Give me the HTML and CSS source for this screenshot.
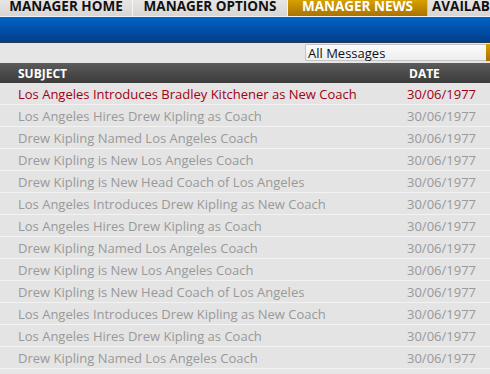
FILE: index.html
```html
<!DOCTYPE html>
<html lang="en">
<head>
  <meta charset="UTF-8">
  <title>Manager News</title>
  <link rel="stylesheet" href="styles.css">
</head>
<body>
  <div class="tabs">
    <div class="tab tab-home">MANAGER HOME</div>
    <div class="tab tab-options">MANAGER OPTIONS</div>
    <div class="tab tab-news active">MANAGER NEWS</div>
    <div class="tab tab-avail">AVAILABLE JOBS</div>
  </div>
  <div class="blue-bar"></div>
  <div class="filter-row">
    <div class="select-box">
      <span>All Messages</span>
      <div class="select-btn"></div>
    </div>
  </div>
  <div class="news-head">
    <div class="col-subject">SUBJECT</div>
    <div class="col-date">DATE</div>
  </div>
  <div class="news-list">
    <div class="news-row unread"><div class="col-subject">Los Angeles Introduces Bradley Kitchener as New Coach</div><div class="col-date">30/06/1977</div></div>
    <div class="news-row"><div class="col-subject">Los Angeles Hires Drew Kipling as Coach</div><div class="col-date">30/06/1977</div></div>
    <div class="news-row"><div class="col-subject">Drew Kipling Named Los Angeles Coach</div><div class="col-date">30/06/1977</div></div>
    <div class="news-row"><div class="col-subject">Drew Kipling is New Los Angeles Coach</div><div class="col-date">30/06/1977</div></div>
    <div class="news-row"><div class="col-subject">Drew Kipling is New Head Coach of Los Angeles</div><div class="col-date">30/06/1977</div></div>
    <div class="news-row"><div class="col-subject">Los Angeles Introduces Drew Kipling as New Coach</div><div class="col-date">30/06/1977</div></div>
    <div class="news-row"><div class="col-subject">Los Angeles Hires Drew Kipling as Coach</div><div class="col-date">30/06/1977</div></div>
    <div class="news-row"><div class="col-subject">Drew Kipling Named Los Angeles Coach</div><div class="col-date">30/06/1977</div></div>
    <div class="news-row"><div class="col-subject">Drew Kipling is New Los Angeles Coach</div><div class="col-date">30/06/1977</div></div>
    <div class="news-row"><div class="col-subject">Drew Kipling is New Head Coach of Los Angeles</div><div class="col-date">30/06/1977</div></div>
    <div class="news-row"><div class="col-subject">Los Angeles Introduces Drew Kipling as New Coach</div><div class="col-date">30/06/1977</div></div>
    <div class="news-row"><div class="col-subject">Los Angeles Hires Drew Kipling as Coach</div><div class="col-date">30/06/1977</div></div>
    <div class="news-row"><div class="col-subject">Drew Kipling Named Los Angeles Coach</div><div class="col-date">30/06/1977</div></div>
  </div>
</body>
</html>
```

FILE: styles.css
```css
body {
  margin: 0;
  font-family: "Open Sans", "DejaVu Sans", sans-serif;
  background: #e6e6e6;
  overflow: hidden;
}
.tabs {
  display: flex;
  height: 16px;
  background: #e2e0de;
  border-bottom: 1px solid #f2f2f2;
  white-space: nowrap;
  overflow: hidden;
}
.tab {
  height: 16px;
  line-height: 12px;
  font-size: 13.5px;
  font-weight: bold;
  color: #111;
  text-align: center;
  background: linear-gradient(#e8e6e4, #d8d6d4);
  border-right: 1px solid #f4f4f4;
  box-sizing: border-box;
  flex: none;
}
.tab-home { width: 133px; }
.tab-options { width: 155px; }
.tab-news { width: 140px; }
.tab-avail { width: 140px; padding-left: 4px; text-align: left; }
.tab.active {
  color: #fff;
  background: linear-gradient(#d9a000, #a87200);
  border-right-color: #c8c6c4;
}
.blue-bar {
  height: 25px;
  background: linear-gradient(#0064c8, #004fa8 50%, #00408c);
  border-bottom: 1px solid #2a3a50;
}
.filter-row {
  height: 20px;
  display: flex;
  justify-content: flex-end;
  padding-top: 1px;
  box-sizing: border-box;
}
.select-box {
  width: 185px;
  height: 17px;
  box-sizing: border-box;
  background: linear-gradient(#fbfbfb, #eeeeee);
  border: 1px solid #c4c4c4;
  border-right: none;
  border-radius: 2px 0 0 2px;
  display: flex;
  align-items: center;
  font-size: 13px;
  color: #111;
  padding-left: 2px;
}
.select-box span { flex: 1; }
.select-btn {
  width: 4px;
  height: 17px;
  background: linear-gradient(#d9a000, #a87200);
}
.news-head {
  height: 20px;
  display: flex;
  align-items: center;
  background: linear-gradient(#5c5c5c, #4a4a4a 50%, #3c3c3c);
  color: #fff;
  font-size: 12px;
  font-weight: bold;
}
.col-subject {
  flex: 1;
  padding-left: 18px;
}
.col-date {
  width: 81px;
}
.news-row {
  height: 22px;
  display: flex;
  align-items: center;
  border-bottom: 1px solid #f2f2f2;
  box-sizing: border-box;
  font-size: 13px;
  color: #999;
  background: #e4e4e4;
}
.news-row.unread {
  color: #a00014;
}
.news-row .col-date {
  width: 80px;
  margin-right: 14px;
  text-align: right;
}
```
